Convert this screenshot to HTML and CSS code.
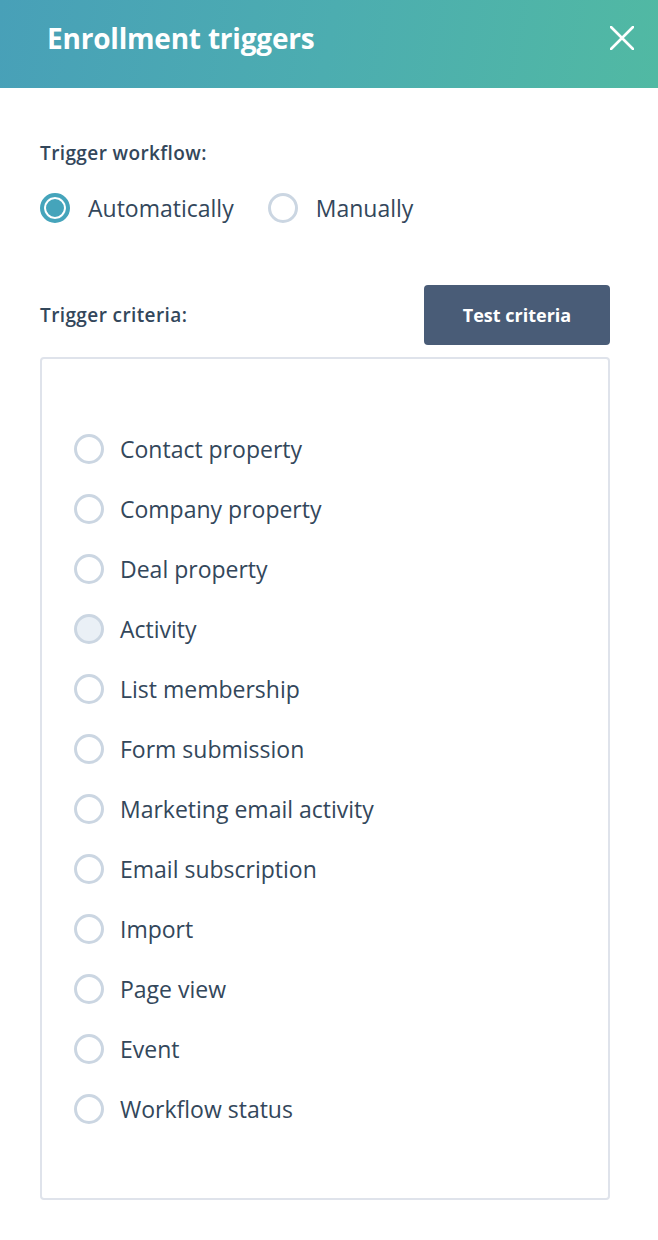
FILE: index.html
```html
<!DOCTYPE html>
<html>
<head>
<meta charset="utf-8">
<link rel="stylesheet" href="styles.css">
</head>
<body>
<div class="panel">
  <header class="header">
    <h1 class="title">Enrollment triggers</h1>
    <button class="close" aria-label="Close">
      <svg width="24" height="24" viewBox="0 0 24 24"><path d="M1 1 L23 23 M23 1 L1 23" stroke="#fff" stroke-width="2.6" stroke-linecap="round" fill="none"/></svg>
    </button>
  </header>
  <main class="content">
    <div class="label workflow-label">Trigger workflow:</div>
    <div class="mode-row">
      <label class="option"><span class="radio selected"></span><span class="opt-text">Automatically</span></label>
      <label class="option"><span class="radio"></span><span class="opt-text">Manually</span></label>
    </div>
    <div class="criteria-head">
      <div class="label">Trigger criteria:</div>
      <button class="btn">Test criteria</button>
    </div>
    <div class="box">
      <div class="item"><span class="radio"></span><span class="opt-text">Contact property</span></div>
      <div class="item"><span class="radio"></span><span class="opt-text">Company property</span></div>
      <div class="item"><span class="radio"></span><span class="opt-text">Deal property</span></div>
      <div class="item"><span class="radio hover"></span><span class="opt-text">Activity</span></div>
      <div class="item"><span class="radio"></span><span class="opt-text">List membership</span></div>
      <div class="item"><span class="radio"></span><span class="opt-text">Form submission</span></div>
      <div class="item"><span class="radio"></span><span class="opt-text">Marketing email activity</span></div>
      <div class="item"><span class="radio"></span><span class="opt-text">Email subscription</span></div>
      <div class="item"><span class="radio"></span><span class="opt-text">Import</span></div>
      <div class="item"><span class="radio"></span><span class="opt-text">Page view</span></div>
      <div class="item"><span class="radio"></span><span class="opt-text">Event</span></div>
      <div class="item"><span class="radio"></span><span class="opt-text">Workflow status</span></div>
    </div>
  </main>
</div>
</body>
</html>
```
FILE: styles.css
```css
* { box-sizing: border-box; }
html, body { margin: 0; padding: 0; background: #fff; }
body { font-family: "Open Sans", "Lato", sans-serif; color: #33475b; }

.header {
  height: 88px;
  background: linear-gradient(100deg, #48a0b8 0%, #4cadb0 50%, #51b9a3 100%);
  display: flex;
  align-items: center;
  justify-content: space-between;
  padding: 0 24px 12px 47px;
}
.title {
  margin: 0;
  font-size: 28px;
  font-weight: 700;
  color: #fff;
  letter-spacing: -0.2px;
}
.close {
  border: 0;
  background: none;
  padding: 0;
  width: 24px;
  height: 24px;
  display: flex;
  cursor: pointer;
}

.content { padding: 0 48px 0 40px; }

.label {
  font-size: 19px;
  font-weight: 600;
  letter-spacing: 0.4px;
  color: #33475b;
}
.workflow-label { margin-top: 52px; line-height: 26px; }

.mode-row {
  display: flex;
  gap: 34px;
  margin-top: 23px;
  height: 38px;
  align-items: center;
}
.option {
  display: flex;
  align-items: center;
  gap: 18px;
  cursor: pointer;
}
.opt-text { font-size: 23px; color: #33475b; }

.radio {
  width: 30px;
  height: 30px;
  border-radius: 50%;
  border: 3px solid #cbd6e2;
  background: #fff;
  flex: none;
  display: inline-block;
}
.radio.selected {
  border: 4px solid #45a4bb;
  box-shadow: inset 0 0 0 2px #fff, inset 0 0 0 11px #45a4bb;
}
.radio.hover { background: #eaf0f6; }

.criteria-head {
  display: flex;
  justify-content: space-between;
  align-items: center;
  margin-top: 58px;
}
.btn {
  width: 186px;
  height: 60px;
  border: 0;
  border-radius: 4px;
  background: #495c77;
  color: #fff;
  font-family: inherit;
  font-size: 18px;
  font-weight: 700;
}

.box {
  margin-top: 12px;
  border: 2px solid #dfe3eb;
  border-radius: 4px;
  padding: 60px 0 59px 32px;
}
.item {
  height: 60px;
  display: flex;
  align-items: center;
  gap: 16px;
}
```
